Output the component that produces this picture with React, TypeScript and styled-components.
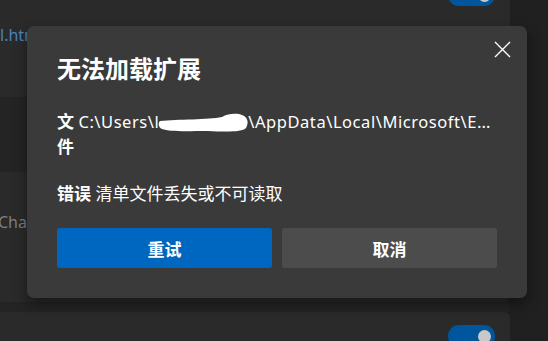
import React from "react";
import styled, { createGlobalStyle } from "styled-components";

const GlobalStyle = createGlobalStyle`
  html, body {
    margin: 0;
    padding: 0;
    background: #202020;
    overflow: hidden;
  }
  body {
    font-family: "Segoe UI", "Noto Sans", "Noto Sans CJK SC", sans-serif;
    color: #ffffff;
  }
`;

const Screen = styled.div`
  position: relative;
  width: 548px;
  height: 341px;
  overflow: hidden;
  background: #202020;
`;

// settings page behind the modal (scrolled a little)
const Page = styled.div`
  display: flex;
  flex-direction: column;
  width: 510px;
  margin-top: -26px;
`;

const Card = styled.div<{ $height: number; $top?: number }>`
  display: flex;
  flex-direction: column;
  height: ${(p) => p.$height}px;
  background: #2a2a2a;
  border-radius: 0 6px 6px 0;
  padding: ${(p) => p.$top ?? 10}px 15px 0 0;
  box-sizing: border-box;
`;

const Band = styled.div<{ $height: number }>`
  height: ${(p) => p.$height}px;
  background: #242424;
`;

const ToggleRow = styled.div`
  display: flex;
  justify-content: flex-end;
`;

const Toggle = styled.div`
  width: 47px;
  height: 22px;
  border-radius: 11px;
  background: #00569c;
  display: flex;
  align-items: center;
  justify-content: flex-end;
  padding-right: 4px;
  box-sizing: border-box;
`;

const Thumb = styled.span`
  width: 13px;
  height: 13px;
  border-radius: 50%;
  background: #c8c8c8;
`;

const LinkText = styled.span`
  margin-top: 18px;
  font-size: 16px;
  color: #4a82bd;
  line-height: 22px;
`;

const MutedText = styled.span`
  margin-top: 29px;
  margin-left: -2px;
  font-size: 16px;
  color: #7e7e7e;
  line-height: 22px;
`;

const Dialog = styled.div`
  position: absolute;
  left: 27px;
  top: 26px;
  width: 500px;
  box-sizing: border-box;
  padding: 26px 30px 30px;
  background: #3a3a3a;
  border-radius: 7px;
  box-shadow: 0 6px 14px rgba(0, 0, 0, 0.45);
  display: flex;
  flex-direction: column;
`;

const CloseButton = styled.button`
  position: absolute;
  top: 14px;
  right: 16px;
  width: 18px;
  height: 18px;
  padding: 0;
  border: none;
  background: transparent;
  display: flex;
  align-items: center;
  justify-content: center;
  cursor: pointer;
`;

const Title = styled.h2`
  margin: 0 0 25px;
  font-size: 24px;
  line-height: 32px;
  font-weight: 700;
  font-family: "Noto Sans CJK SC", sans-serif;
`;

const Para = styled.div`
  font-size: 17px;
  line-height: 24px;
  margin-bottom: 22px;
`;

const Line = styled.div`
  white-space: nowrap;
  overflow: hidden;
  text-overflow: ellipsis;
`;

const Path = styled.span`
  font-size: 16.5px;
  letter-spacing: 0.55px;
`;

const Label = styled.b`
  font-weight: 700;
  font-family: "Noto Sans CJK SC", sans-serif;
`;

const Redacted = styled.svg`
  vertical-align: -5px;
  margin: 0 -2px 0 -1px;
`;

const Buttons = styled.div`
  display: grid;
  grid-template-columns: 1fr 1fr;
  gap: 10px;
`;

const Button = styled.button<{ $primary?: boolean }>`
  height: 40px;
  border: none;
  border-radius: 3px;
  background: ${(p) => (p.$primary ? "#0067c0" : "#4c4c4c")};
  color: #ffffff;
  font-size: 17px;
  font-weight: 700;
  font-family: "Noto Sans CJK SC", sans-serif;
  cursor: pointer;
`;

const App = () => {
  return (
    <Screen>
      <GlobalStyle />
      <Page>
        <Card $height={123}>
          <ToggleRow>
            <Toggle>
              <Thumb />
            </Toggle>
          </ToggleRow>
          <LinkText>l.html</LinkText>
        </Card>
        <Band $height={75} />
        <Card $height={130}>
          <MutedText>Chat</MutedText>
        </Card>
        <Band $height={10} />
        <Card $height={60} $top={13}>
          <ToggleRow>
            <Toggle>
              <Thumb />
            </Toggle>
          </ToggleRow>
        </Card>
      </Page>

      <Dialog role="dialog">
        <CloseButton aria-label="关闭">
          <svg width="17" height="17" viewBox="0 0 17 17">
            <path
              d="M1 1 L16 16 M16 1 L1 16"
              stroke="#ffffff"
              strokeWidth="1.4"
              fill="none"
            />
          </svg>
        </CloseButton>
        <Title>无法加载扩展</Title>
        <Para>
          <Line>
            <Label>文</Label>{" "}
            <Path>
              C:\Users\l
              <Redacted width="92" height="20" viewBox="0 0 92 20">
                <path
                  d="M2 8 C20 6 50 7 64 4 C70 0 80 0 84 2 C90 4 91 10 88 15 C84 19 70 19 50 18 C30 18 12 19 4 16 C0 14 0 10 2 8 Z"
                  fill="#ffffff"
                />
              </Redacted>
              \AppData\Local\Microsoft\Edge\User Data\Default\Extensions
            </Path>
          </Line>
          <Line>
            <Label>件</Label>
          </Line>
        </Para>
        <Para>
          <Label>错误</Label> 清单文件丢失或不可读取
        </Para>
        <Buttons>
          <Button $primary>重试</Button>
          <Button>取消</Button>
        </Buttons>
      </Dialog>
    </Screen>
  );
};

export default App;
